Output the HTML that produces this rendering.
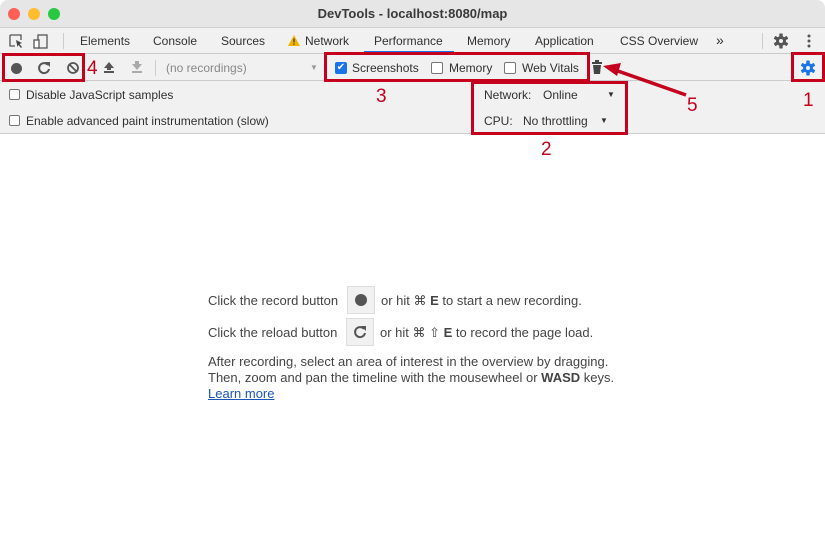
<!DOCTYPE html>
<html><head><style>
*{margin:0;padding:0;box-sizing:border-box}
body{width:825px;height:541px;background:#fff;font-family:"Liberation Sans",sans-serif;font-size:12px;color:#303030;position:relative;overflow:hidden}
.a{position:absolute;white-space:nowrap}
.cb{position:absolute;width:11px;height:11px;border:1px solid #777;border-radius:2px;background:#fff}
.red{position:absolute;border:3px solid #c4001c}
.num{position:absolute;color:#c4001c;font-size:19px}
.t{color:#444;font-size:13px}
</style></head><body>
<svg width="0" height="0" style="position:absolute"><defs><g id="gear"><circle cx="8" cy="8" r="5"/><g><rect x="6.3" y="0.5" width="3.4" height="15" rx=".6"/><rect x="6.3" y="0.5" width="3.4" height="15" rx=".6" transform="rotate(60 8 8)"/><rect x="6.3" y="0.5" width="3.4" height="15" rx=".6" transform="rotate(120 8 8)"/></g></g></defs></svg>
<div class="a" style="left:0;top:0;width:825px;height:28px;background:#e6e6e6;border-bottom:1px solid #cfcfcf;border-radius:8px 8px 0 0"></div>
<div class="a" style="left:8px;top:8px;width:12px;height:12px;border-radius:6px;background:#fe5f57"></div>
<div class="a" style="left:28px;top:8px;width:12px;height:12px;border-radius:6px;background:#febc2e"></div>
<div class="a" style="left:48px;top:8px;width:12px;height:12px;border-radius:6px;background:#28c840"></div>
<div class="a" style="left:0;width:825px;top:6px;text-align:center;font-weight:bold;font-size:13px;color:#3a3a3a">DevTools - localhost:8080/map</div>
<div class="a" style="left:0;top:28px;width:825px;height:26px;background:#f1f1f1;border-bottom:1px solid #cbcbcb"></div>
<svg class="a" style="left:9px;top:33px" width="45" height="16"><path d="M1 2h11v5M1 2v11h5" fill="none" stroke="#555" stroke-width="1.3"/><path d="M7 7l6 3-2.5 1 2.5 3-1 1-2.5-3-1 2z" fill="#444"/><rect x="29" y="2" width="9" height="13" fill="none" stroke="#555" stroke-width="1.3"/><rect x="25" y="7" width="5" height="8" fill="#fff" stroke="#555" stroke-width="1.3"/></svg>
<div class="a" style="left:63px;top:33px;width:1px;height:16px;background:#ccc"></div>
<div class="a" style="left:80px;top:34px;color:#333">Elements</div>
<div class="a" style="left:153px;top:34px">Console</div>
<div class="a" style="left:221px;top:34px">Sources</div>
<svg class="a" style="left:288px;top:35px" width="12" height="11"><path d="M6 0L12 11H0z" fill="#f0b400"/><rect x="5.4" y="3.5" width="1.2" height="4" fill="#333"/><rect x="5.4" y="8.5" width="1.2" height="1.2" fill="#333"/></svg>
<div class="a" style="left:305px;top:34px">Network</div>
<div class="a" style="left:374px;top:34px">Performance</div>
<div class="a" style="left:364px;top:51px;width:90px;height:2px;background:#1a73e8"></div>
<div class="a" style="left:467px;top:34px">Memory</div>
<div class="a" style="left:535px;top:34px">Application</div>
<div class="a" style="left:620px;top:34px">CSS Overview</div>
<div class="a" style="left:716px;top:32px;font-size:14px">»</div>
<div class="a" style="left:762px;top:33px;width:1px;height:16px;background:#ccc"></div>
<svg class="a" style="left:773px;top:33px" width="16" height="16"><g fill="#555"><use href="#gear"/></g><circle cx="8" cy="8" r="2" fill="#f1f1f1"/></svg>
<svg class="a" style="left:806px;top:33px" width="6" height="16"><circle cx="3" cy="3" r="1.5" fill="#555"/><circle cx="3" cy="8" r="1.5" fill="#555"/><circle cx="3" cy="13" r="1.5" fill="#555"/></svg>
<div class="a" style="left:0;top:54px;width:825px;height:27px;background:#f1f1f1;border-bottom:1px solid #cbcbcb"></div>
<div class="a" style="left:11px;top:63px;width:11px;height:11px;border-radius:6px;background:#555"></div>
<svg class="a" style="left:37px;top:61px" width="14" height="14"><path d="M11 4A5 5 0 1 0 12 8" fill="none" stroke="#555" stroke-width="2"/><path d="M8 1h5v5z" fill="#555"/></svg>
<svg class="a" style="left:66px;top:61px" width="14" height="14"><circle cx="7" cy="7" r="5" fill="none" stroke="#555" stroke-width="1.8"/><path d="M3.5 3.5l7 7" stroke="#555" stroke-width="1.8"/></svg>
<svg class="a" style="left:102px;top:61px" width="14" height="13"><path d="M7 1L12 7H2z" fill="#555"/><rect x="5" y="6" width="4" height="3" fill="#555"/><rect x="2" y="10" width="10" height="2" fill="#555"/></svg>
<svg class="a" style="left:130px;top:61px" width="14" height="13"><path d="M7 9L12 3H2z" fill="#aaa"/><rect x="5" y="0" width="4" height="4" fill="#aaa"/><rect x="2" y="10" width="10" height="2" fill="#aaa"/></svg>
<div class="a" style="left:155px;top:60px;width:1px;height:16px;background:#ccc"></div>
<div class="a" style="left:166px;top:61px;color:#888">(no recordings)</div>
<div class="a" style="left:310px;top:63px;font-size:8px;color:#999">▼</div>
<div class="a" style="left:335px;top:62px;width:12px;height:12px;border-radius:2px;background:#1a73e8;color:#fff;font-size:10px;line-height:12px;text-align:center">✔</div>
<div class="a" style="left:352px;top:61px">Screenshots</div>
<div class="cb" style="left:431px;top:62px;width:12px;height:12px"></div>
<div class="a" style="left:449px;top:61px">Memory</div>
<div class="cb" style="left:504px;top:62px;width:12px;height:12px"></div>
<div class="a" style="left:522px;top:61px">Web Vitals</div>
<svg class="a" style="left:591px;top:60px" width="12" height="15"><rect x="1" y="2" width="10" height="2" fill="#444"/><rect x="4" y="0" width="4" height="2" fill="#444"/><path d="M2 5h8l-1 9H3z" fill="#444"/></svg>
<svg class="a" style="left:800px;top:60px" width="16" height="16"><g fill="#1a73e8"><use href="#gear"/></g><circle cx="8" cy="8" r="2" fill="#f1f1f1"/></svg>
<div class="a" style="left:0;top:81px;width:825px;height:53px;background:#f1f1f1;border-bottom:1px solid #cbcbcb"></div>
<div class="cb" style="left:9px;top:89px"></div>
<div class="a" style="left:26px;top:88px">Disable JavaScript samples</div>
<div class="cb" style="left:9px;top:115px"></div>
<div class="a" style="left:26px;top:114px">Enable advanced paint instrumentation (slow)</div>
<div class="a" style="left:484px;top:88px">Network:</div>
<div class="a" style="left:543px;top:88px">Online</div>
<div class="a" style="left:607px;top:90px;font-size:8px">▼</div>
<div class="a" style="left:484px;top:114px">CPU:</div>
<div class="a" style="left:523px;top:114px">No throttling</div>
<div class="a" style="left:600px;top:116px;font-size:8px">▼</div>
<div class="a t" style="left:208px;top:293px">Click the record button</div>
<div class="a" style="left:347px;top:286px;width:28px;height:28px;background:#f1f1f1;border:1px solid #ddd"></div>
<div class="a" style="left:355px;top:294px;width:12px;height:12px;border-radius:6px;background:#555"></div>
<div class="a t" style="left:381px;top:293px">or hit ⌘ <b>E</b> to start a new recording.</div>
<div class="a t" style="left:208px;top:325px">Click the reload button</div>
<div class="a" style="left:346px;top:318px;width:28px;height:28px;background:#f1f1f1;border:1px solid #ddd"></div>
<svg class="a" style="left:353px;top:325px" width="14" height="14"><path d="M11 4A5 5 0 1 0 12 8" fill="none" stroke="#555" stroke-width="2"/><path d="M8 1h5v5z" fill="#555"/></svg>
<div class="a t" style="left:380px;top:325px">or hit ⌘ ⇧ <b>E</b> to record the page load.</div>
<div class="a t" style="left:208px;top:354px;line-height:16px">After recording, select an area of interest in the overview by dragging.<br>Then, zoom and pan the timeline with the mousewheel or <b>WASD</b> keys.<br><span style="color:#1a55b8;text-decoration:underline">Learn more</span></div>
<div class="red" style="left:2px;top:53px;width:83px;height:29px"></div>
<div class="red" style="left:324px;top:52px;width:266px;height:30px"></div>
<div class="red" style="left:471px;top:81px;width:157px;height:54px"></div>
<div class="red" style="left:791px;top:52px;width:34px;height:30px"></div>
<div class="num" style="left:87px;top:58px">4</div>
<div class="num" style="left:376px;top:86px">3</div>
<div class="num" style="left:541px;top:139px">2</div>
<div class="num" style="left:687px;top:95px">5</div>
<div class="num" style="left:803px;top:90px">1</div>
<svg class="a" style="left:0;top:0" width="825" height="541"><path d="M686 95L615 70" stroke="#c4001c" stroke-width="3.5"/><path d="M603 66l18-3-4 13z" fill="#c4001c"/></svg>
</body></html>
